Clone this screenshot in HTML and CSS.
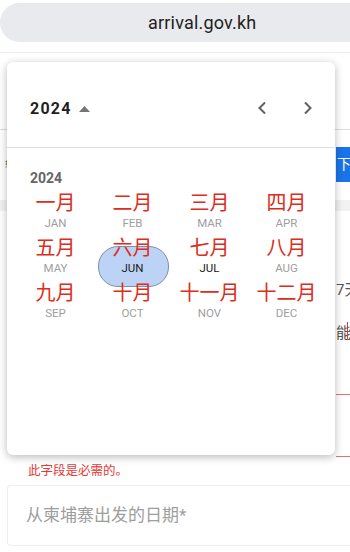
FILE: index.html
```html
<!DOCTYPE html>
<html lang="zh">
<head>
    <meta charset="UTF-8">
    <meta name="viewport" content="width=device-width, initial-scale=1.0">
    <title>arrival.gov.kh</title>
    <link rel="stylesheet" href="styles.css">
</head>
<body>
    <div class="browser-bar">
        <div class="address">arrival.gov.kh</div>
    </div>

    <div class="page">
        <div class="form-bg">
            <div class="bg-line"></div>
            <div class="bg-row">
                <span class="green-label">辅</span>
                <span class="blue-btn">下</span>
            </div>
            <div class="bg-strip"></div>
            <div class="bg-row text-row first"><span class="peek">7天</span></div>
            <div class="bg-row text-row"><span class="peek">能<i class="caret"></i></span></div>
            <div class="bg-underline one"></div>
            <div class="bg-underline two"></div>
        </div>

        <div class="error">此字段是必需的。</div>
        <div class="field">从柬埔寨出发的日期*</div>

        <div class="picker">
            <div class="picker-head">
                <div class="year-toggle">
                    <span>2024</span>
                    <svg width="11" height="6" viewBox="0 0 11 6"><path d="M0 6 L5.5 0 L11 6 Z" fill="#757575"/></svg>
                </div>
                <div class="nav">
                    <svg width="10" height="14" viewBox="0 0 10 14"><path d="M8 1.5 L2.5 7 L8 12.5" fill="none" stroke="#616161" stroke-width="2"/></svg>
                    <svg width="10" height="14" viewBox="0 0 10 14"><path d="M2 1.5 L7.5 7 L2 12.5" fill="none" stroke="#616161" stroke-width="2"/></svg>
                </div>
            </div>
            <div class="picker-body">
                <div class="year-label">2024</div>
                <div class="months">
                    <div class="month"><span class="cn">一月</span><span class="en">JAN</span></div>
                    <div class="month"><span class="cn">二月</span><span class="en">FEB</span></div>
                    <div class="month"><span class="cn">三月</span><span class="en">MAR</span></div>
                    <div class="month"><span class="cn">四月</span><span class="en">APR</span></div>
                    <div class="month"><span class="cn">五月</span><span class="en">MAY</span></div>
                    <div class="month selected"><span class="cn">六月</span><span class="en">JUN</span></div>
                    <div class="month current"><span class="cn">七月</span><span class="en">JUL</span></div>
                    <div class="month"><span class="cn">八月</span><span class="en">AUG</span></div>
                    <div class="month"><span class="cn">九月</span><span class="en">SEP</span></div>
                    <div class="month"><span class="cn">十月</span><span class="en">OCT</span></div>
                    <div class="month"><span class="cn">十一月</span><span class="en">NOV</span></div>
                    <div class="month"><span class="cn">十二月</span><span class="en">DEC</span></div>
                </div>
            </div>
        </div>
    </div>
</body>
</html>
```

FILE: styles.css
```css
* {
    margin: 0;
    padding: 0;
    box-sizing: border-box;
}

html, body {
    width: 100%;
    height: 100%;
    background: #ffffff;
    font-family: Roboto, "Noto Sans CJK SC", sans-serif;
    overflow: hidden;
}

.browser-bar {
    height: 53px;
    padding-top: 3px;
    border-bottom: 1px solid #eeeeee;
}

.address {
    height: 39px;
    border-radius: 20px 0 0 20px;
    background: #e8eaed;
    color: #222222;
    font-size: 18px;
    line-height: 39px;
    padding-left: 148px;
    letter-spacing: 0.2px;
}

.page {
    position: relative;
}

.form-bg {
    height: 404px;
    display: flex;
    flex-direction: column;
}

.bg-line {
    height: 1px;
    margin-top: 76px;
    background: #dddddd;
}

.bg-row {
    display: flex;
    align-items: center;
    justify-content: space-between;
}

.bg-row:nth-child(2) {
    margin-top: 17px;
    height: 35px;
}

.green-label {
    font-size: 9px;
    color: #1b7f5a;
    padding-left: 3px;
    writing-mode: vertical-rl;
}

.blue-btn {
    width: 14px;
    height: 35px;
    background: #1a73e8;
    color: #ffffff;
    font-size: 14px;
    line-height: 35px;
    padding-left: 1px;
}

.bg-strip {
    height: 11px;
    margin-top: 18px;
    background: #f2f2f2;
}

.text-row {
    justify-content: flex-end;
}

.text-row.first {
    margin-top: 67px;
}

.text-row + .text-row {
    margin-top: 22px;
}

.peek {
    width: 14px;
    overflow: hidden;
    white-space: nowrap;
    font-size: 15px;
    color: #555555;
    position: relative;
}

.caret {
    position: absolute;
    left: 11px;
    top: 1px;
    width: 1px;
    height: 18px;
    background: #e53935;
}

.bg-underline {
    height: 1px;
    margin-left: 336px;
    background: #e57373;
}

.bg-underline.one {
    margin-top: 52px;
}

.bg-underline.two {
    margin-top: 61px;
}

.error {
    padding-left: 28px;
    margin-top: 5px;
    font-size: 12.5px;
    color: #e53935;
    line-height: 18px;
}

.field {
    margin: 5px 0 0 7px;
    height: 61px;
    border: 1px solid #eeeeee;
    border-right: none;
    border-radius: 4px 0 0 4px;
    padding-left: 18px;
    font-size: 17px;
    line-height: 59px;
    color: #9e9e9e;
}

.picker {
    position: absolute;
    top: 9px;
    left: 7px;
    width: 328px;
    height: 393px;
    background: #ffffff;
    border-radius: 6px;
    box-shadow: 0 2px 8px rgba(0, 0, 0, 0.28);
}

.picker-head {
    height: 86px;
    padding: 7px 22px 0 23px;
    display: flex;
    align-items: center;
    justify-content: space-between;
    border-bottom: 1px solid #e0e0e0;
}

.year-toggle {
    display: flex;
    align-items: center;
    gap: 7px;
    font-size: 16px;
    font-weight: 700;
    letter-spacing: 1.2px;
    color: #1f1f1f;
}

.year-toggle svg {
    margin-top: 1px;
}

.nav {
    display: flex;
    gap: 36px;
    align-items: center;
}

.picker-body {
    padding: 21px 10px 0;
}

.year-label {
    padding-left: 13px;
    font-size: 14px;
    font-weight: 700;
    color: #666666;
    line-height: 18px;
}

.months {
    display: grid;
    grid-template-columns: repeat(4, 1fr);
    row-gap: 3px;
    margin-top: 2px;
}

.month {
    position: relative;
    display: flex;
    flex-direction: column;
    align-items: center;
}

.month .cn {
    position: relative;
    font-family: "Noto Sans CJK SC", sans-serif;
    font-size: 20px;
    line-height: 26px;
    color: #dd2c20;
    z-index: 1;
}

.month .en {
    position: relative;
    font-size: 11.5px;
    line-height: 16px;
    color: #9e9e9e;
    z-index: 1;
}

.month.current .en,
.month.selected .en {
    color: #202020;
}

.month.selected::before {
    content: "";
    position: absolute;
    left: 50%;
    top: 12px;
    width: 69px;
    height: 39px;
    margin-left: -35px;
    border-radius: 20px;
    background: #bcd3f5;
    border: 1px solid #7d8fa8;
}
```
